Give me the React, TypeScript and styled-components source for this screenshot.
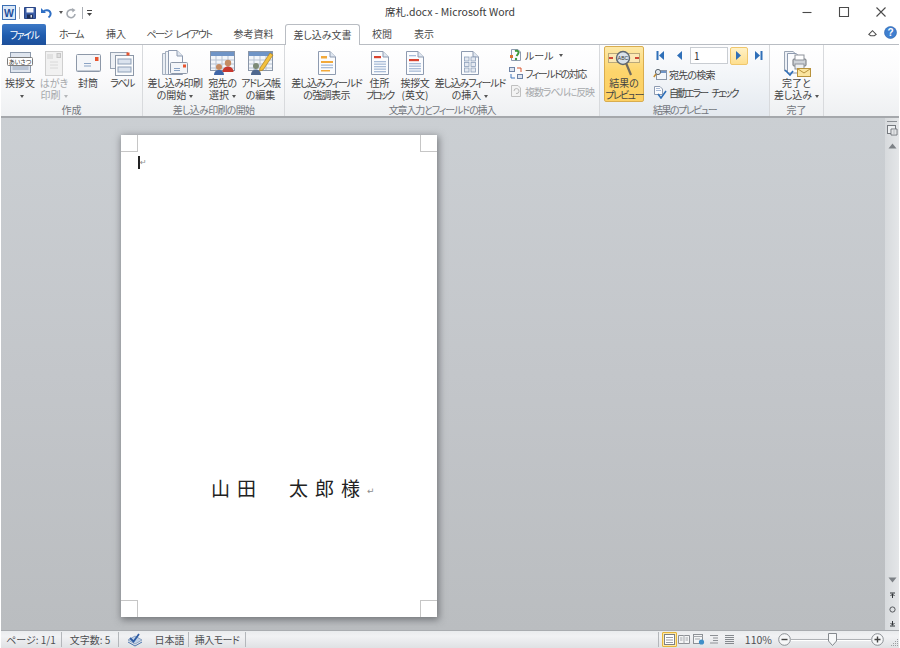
import React from 'react';
import styled, { createGlobalStyle, css } from 'styled-components';

const GlobalStyle = createGlobalStyle`
  html, body {
    margin: 0;
    padding: 0;
    background: #fff;
  }
  body {
    font-family: "Noto Sans CJK JP", "Noto Sans", sans-serif;
    font-feature-settings: "palt";
    color: #444;
    font-size: 10px;
  }
`;

const Window = styled.div`
  width: 900px;
  height: 648px;
  display: flex;
  flex-direction: column;
  overflow: hidden;
  box-sizing: border-box;
  padding: 0 1px;
  background: #fff;
`;

/* kana in the UI font of the reference is narrower than in Noto */
const Fit = styled.span<{ $sp: number; $ws?: number }>`
  letter-spacing: ${p => p.$sp}px;
  word-spacing: ${p => p.$ws ?? 0}px;
`;

/* title bar */
const TitleBar = styled.div`
  height: 23px;
  flex: none;
  display: grid;
  grid-template-columns: 1fr auto 1fr;
  align-items: center;
`;

const Qat = styled.div`
  display: flex;
  align-items: center;
  padding-left: 1px;
  padding-top: 2px;
`;

const QatButton = styled.span<{ $w: number }>`
  width: ${p => p.$w}px;
  display: flex;
  align-items: center;
  justify-content: center;
  height: 16px;
`;

const QatSep = styled.span`
  width: 1px;
  height: 12px;
  background: #a9adb3;
  margin: 0 3px;
`;

const Title = styled.div`
  font-size: 10.5px;
  color: #3c3c3c;
`;

const WinButtons = styled.div`
  display: flex;
  justify-content: flex-end;
  align-items: center;
`;

const WinButton = styled.span`
  width: 37px;
  height: 22px;
  display: flex;
  align-items: center;
  justify-content: center;
`;

/* tabs */
const TabRow = styled.div`
  height: 22px;
  flex: none;
  box-sizing: border-box;
  display: flex;
  align-items: flex-end;
  border-bottom: 1px solid #b9bdc3;
  padding-left: 1px;
`;

const FileTab = styled.div`
  width: 44px;
  height: 21px;
  margin-bottom: -1px;
  padding-bottom: 1px;
  box-sizing: border-box;
  display: flex;
  align-items: center;
  justify-content: center;
  color: #fff;
  font-size: 10px;
  border-radius: 2px 2px 0 0;
  background: linear-gradient(#3d79c6, #1f5cae 55%, #1d4f9a);
`;

const Tab = styled.div<{ $w: number; $active?: boolean }>`
  width: ${p => p.$w}px;
  height: 20px;
  box-sizing: border-box;
  padding-bottom: 2px;
  display: flex;
  align-items: center;
  justify-content: center;
  font-size: 10px;
  color: #4a4a4a;
  ${p =>
    p.$active &&
    css`
      height: 21px;
      margin-bottom: -1px;
      background: #fff;
      border: 1px solid #b9bdc3;
      border-bottom: none;
      border-radius: 3px 3px 0 0;
    `}
`;

const TabRight = styled.div`
  margin-left: auto;
  height: 20px;
  display: flex;
  align-items: center;
  gap: 6px;
  padding: 0 2px 2px 0;
`;

/* ribbon */
const Ribbon = styled.div`
  height: 73px;
  flex: none;
  box-sizing: border-box;
  display: flex;
  border-bottom: 2px solid #a5a8ac;
  background: linear-gradient(#ffffff, #fbfbfc 40%, #eef0f2);
`;

const Group = styled.div<{ $w: number; $tint?: boolean }>`
  width: ${p => p.$w}px;
  flex: none;
  box-sizing: border-box;
  display: flex;
  flex-direction: column;
  border-right: 1px solid #d8dadd;
  ${p => p.$tint && 'background: linear-gradient(#fdfdfe, #f2f5f8 45%, #e4e9ef);'}
`;

const GroupBody = styled.div<{ $pad?: number }>`
  flex: 1;
  display: flex;
  padding-left: ${p => p.$pad ?? 0}px;
`;

const GroupLabel = styled.div`
  height: 13px;
  line-height: 13px;
  text-align: center;
  font-size: 10px;
  color: #73777d;
`;

const RibbonButton = styled.div<{ $w: number; $muted?: boolean; $hot?: boolean }>`
  width: ${p => p.$w}px;
  flex: none;
  box-sizing: border-box;
  display: flex;
  flex-direction: column;
  align-items: center;
  padding-top: 4px;
  font-size: 10px;
  line-height: 12px;
  color: ${p => (p.$muted ? '#a7a9ac' : '#444')};
  white-space: nowrap;
  ${p =>
    p.$hot &&
    css`
      height: 56px;
      margin-top: 1px;
      padding-top: 2px;
      border: 1px solid #d9ad4f;
      border-radius: 2px;
      background: linear-gradient(#fde9a8, #fdd56c 45%, #fcd064);
    `}
`;

const ButtonIcon = styled.div`
  height: 28px;
  display: flex;
  align-items: center;
  justify-content: center;
  flex: none;
`;

const Caret = styled.span<{ $muted?: boolean }>`
  display: inline-block;
  width: 0;
  height: 0;
  margin-left: 3px;
  vertical-align: middle;
  border-left: 2.5px solid transparent;
  border-right: 2.5px solid transparent;
  border-top: 3px solid ${p => (p.$muted ? '#b5b7ba' : '#555')};
`;

const SmallColumn = styled.div<{ $left?: number }>`
  display: flex;
  flex-direction: column;
  margin-left: ${p => p.$left ?? 0}px;
  padding-top: 1px;
`;

const SmallRow = styled.div<{ $muted?: boolean }>`
  height: 18px;
  display: flex;
  align-items: center;
  gap: 2px;
  font-size: 10px;
  white-space: nowrap;
  color: ${p => (p.$muted ? '#a7a9ac' : '#444')};
`;

const NavRow = styled.div`
  height: 19px;
  display: flex;
  align-items: center;
`;

const NavButton = styled.span<{ $w: number; $hot?: boolean }>`
  width: ${p => p.$w}px;
  height: 18px;
  box-sizing: border-box;
  display: flex;
  align-items: center;
  justify-content: center;
  border-radius: 2px;
  ${p =>
    p.$hot &&
    css`
      border: 1px solid #f0c76c;
      background: linear-gradient(#fff1c6, #fedf8e);
    `}
`;

const RecordBox = styled.span`
  width: 38px;
  height: 17px;
  box-sizing: border-box;
  border: 1px solid #c9cdd2;
  background: #fff;
  color: #333;
  font-size: 10px;
  line-height: 15px;
  padding-left: 3px;
  margin: 0 2px 0 1px;
`;

/* workspace */
const Workspace = styled.div`
  flex: 1;
  min-height: 0;
  display: flex;
  background: linear-gradient(#cbcfd3, #c3c6ca 50%, #babdc0);
`;

const DocArea = styled.div`
  flex: 1;
  padding: 17px 0 0 120px;
`;

const Page = styled.div`
  position: relative;
  width: 316px;
  height: 482px;
  box-sizing: border-box;
  background: #fff;
  box-shadow: 1px 2px 7px 1px rgba(60, 62, 66, 0.55);
  display: flex;
  flex-direction: column;
  padding: 21px 0 118px 17px;
`;

const CropMark = styled.span<{ $v: 'top' | 'bottom'; $h: 'left' | 'right' }>`
  position: absolute;
  width: 17px;
  height: 17px;
  box-sizing: border-box;
  ${p => p.$v}: 0;
  ${p => p.$h}: 0;
  border-${p => (p.$v === 'top' ? 'bottom' : 'top')}: 1px solid #c6c6c6;
  border-${p => (p.$h === 'left' ? 'right' : 'left')}: 1px solid #c6c6c6;
`;

const CursorLine = styled.div`
  display: flex;
  align-items: center;
  height: 13px;
`;

const Caretbar = styled.span`
  width: 2px;
  height: 13px;
  background: #222;
`;

const ParaMark = styled.span`
  color: #8c8c8c;
  font-family: "DejaVu Sans", sans-serif;
  font-size: 8px;
  line-height: 8px;
`;

const NameLine = styled.div`
  margin-top: auto;
  padding-left: 73px;
  display: flex;
  align-items: center;
  gap: 6px;
  font-size: 19px;
  line-height: 22px;
  letter-spacing: 7px;
  font-feature-settings: normal;
  color: #222;
  white-space: pre;
`;

const NameMark = styled(ParaMark)`
  letter-spacing: 0;
  padding-top: 6px;
  margin-left: -6px;
  font-size: 9px;
`;

/* scrollbar */
const ScrollBar = styled.div`
  width: 14px;
  flex: none;
  display: flex;
  flex-direction: column;
  align-items: center;
  background: linear-gradient(90deg, #d7dadd, #e4e6e8);
`;

const ScrollCell = styled.span<{ $h: number }>`
  width: 100%;
  height: ${p => p.$h}px;
  display: flex;
  align-items: center;
  justify-content: center;
  flex: none;
`;

const Splitter = styled.span`
  width: 10px;
  height: 1px;
  margin-top: 1px;
  background: #8b8f94;
`;

const ScrollTrack = styled.div`
  flex: 1;
`;

/* status bar */
const StatusBar = styled.div`
  height: 18px;
  flex: none;
  box-sizing: border-box;
  display: flex;
  align-items: center;
  border-top: 1px solid #a9acb0;
  background: linear-gradient(#e9ebed, #f1f2f4 30%, #dfe1e4);
  font-size: 10px;
  color: #4d4f52;
`;

const StatusItem = styled.span<{ $w: number }>`
  width: ${p => p.$w}px;
  height: 15px;
  box-sizing: border-box;
  display: flex;
  align-items: center;
  justify-content: center;
  border-right: 1px solid #b4b7bb;
  white-space: nowrap;
`;

const LangItem = styled(StatusItem)`
  gap: 12px;
  padding-left: 4px;
`;

const StatusRight = styled.div`
  margin-left: auto;
  display: flex;
  align-items: center;
  height: 100%;
`;

const ViewSep = styled(StatusItem)`
  margin-right: 3px;
`;

const ViewButton = styled.span<{ $hot?: boolean }>`
  width: 15px;
  height: 15px;
  box-sizing: border-box;
  display: flex;
  align-items: center;
  justify-content: center;
  ${p =>
    p.$hot &&
    css`
      border: 1px solid #e5b53b;
      background: #fde9a6;
      border-radius: 1px;
    `}
`;

const ZoomText = styled.span`
  margin: 0 6px 0 8px;
  font-size: 10.5px;
`;

const ZoomSlider = styled.div`
  position: relative;
  width: 80px;
  height: 1px;
  background: #aeb1b5;
  border-bottom: 1px solid #fff;
`;

const ZoomThumb = styled.svg`
  position: absolute;
  left: 37px;
  top: -6px;
`;

const GripSlot = styled.span`
  display: flex;
  margin-left: 6px;
  padding-top: 6px;
`;

const DocGlyph = ({ children, muted }: { children?: React.ReactNode; muted?: boolean }) => (
  <svg width="20" height="26" viewBox="0 0 20 26">
    <path
      d="M1.5 1.5H13L18.5 7V24.5H1.5Z"
      fill={muted ? '#f2f2f2' : '#fbfcfe'}
      stroke={muted ? '#cfcfcf' : '#8e9bb0'}
    />
    <path d="M13 1.5V7H18.5" fill="#dfe6f0" stroke={muted ? '#cfcfcf' : '#8e9bb0'} />
    {children}
  </svg>
);

const Lines = ({ y, n, color = '#a9bcd8' }: { y: number; n: number; color?: string }) => (
  <>
    {Array.from({ length: n }, (_, i) => (
      <rect key={i} x="4" y={y + i * 2.5} width="12" height="1.3" fill={color} />
    ))}
  </>
);

const GreetIcon = () => (
  <svg width="26" height="24" viewBox="0 0 26 24">
    <rect x="3.5" y="1.5" width="20" height="20" fill="#dfe5ee" stroke="#8c99ab" />
    <rect x="5.5" y="14" width="16" height="5" fill="#b9c4d4" />
    <rect x="0.5" y="6.5" width="25" height="8" rx="1" fill="#fff" stroke="#7b7b7b" />
    <text x="13" y="13" textAnchor="middle" fontSize="6" fill="#333">あいさつ</text>
  </svg>
);

const PostcardIcon = () => (
  <svg width="18" height="25" viewBox="0 0 18 25">
    <rect x="0.5" y="0.5" width="17" height="24" fill="#f1f1f1" stroke="#cfcfcf" />
    <rect x="12" y="2.5" width="3.5" height="4" fill="#dedede" stroke="#c6c6c6" />
    <path d="M3 3V8M5 3V8M7 3V8" stroke="#d0d0d0" />
    <path d="M5 11H13M5 14H13M5 17H13" stroke="#d8d8d8" />
  </svg>
);

const EnvelopeIcon = () => (
  <svg width="25" height="18" viewBox="0 0 25 18">
    <rect x="0.5" y="0.5" width="24" height="17" rx="1" fill="#f4f6f9" stroke="#8d98a8" />
    <rect x="19" y="3" width="3.5" height="4" fill="#e8552f" />
    <path d="M8 9.5H15M8 12H15" stroke="#8aa3c4" />
    <path d="M1 16.5H24" stroke="#c4cbd5" />
  </svg>
);

const LabelIcon = () => (
  <svg width="24" height="25" viewBox="0 0 24 25">
    <rect x="0.5" y="1.5" width="17" height="16" fill="#eef1f5" stroke="#9aa5b4" />
    <rect x="5.5" y="4.5" width="18" height="20" fill="#fbfcfd" stroke="#8d98a8" />
    <rect x="16.5" y="1.5" width="3" height="3" fill="#e8552f" />
    <rect x="8" y="8" width="13" height="5" fill="#dbe3ee" stroke="#8fa0b8" />
    <rect x="8" y="16" width="13" height="5" fill="#dbe3ee" stroke="#8fa0b8" />
  </svg>
);

const MergeStartIcon = () => (
  <svg width="26" height="26" viewBox="0 0 26 26">
    <path d="M0.5 3.5H10V24.5H0.5Z" fill="#e9edf3" stroke="#a4afbe" />
    <path d="M3.5 1.5H12V24.5H3.5Z" fill="#f1f4f8" stroke="#a4afbe" />
    <path d="M6.5 0.5H15L20.5 6V24.5H6.5Z" fill="#fbfcfe" stroke="#8e9bb0" />
    <path d="M15 0.5V6H20.5" fill="#dfe6f0" stroke="#8e9bb0" />
    <rect x="8.5" y="12.5" width="17" height="11" rx="1" fill="#f3f5f8" stroke="#8d98a8" />
    <rect x="21" y="14.5" width="3" height="3" fill="#e8552f" />
    <path d="M12 18.5H18M12 20.5H18" stroke="#8aa3c4" />
  </svg>
);

const TableBase = () => (
  <>
    <rect x="0.5" y="1.5" width="24" height="19" fill="#f3f6fa" stroke="#8a96a8" />
    <rect x="1" y="2" width="23" height="4" fill="#6f94c6" />
    <path d="M1 10H24M1 14H24M1 18H24M6 6V20M12 6V20M18 6V20" stroke="#b8c3d2" />
  </>
);

const RecipientIcon = () => (
  <svg width="26" height="26" viewBox="0 0 26 26">
    <TableBase />
    <circle cx="9" cy="17" r="3" fill="#c58c62" />
    <path d="M4 25C4 21 7 20 9 20S14 21 14 25Z" fill="#3f66a8" />
    <circle cx="18" cy="13" r="3.2" fill="#c58c62" />
    <path d="M12.5 22C12.5 18 15.5 16.5 18 16.5S23.5 18 23.5 22Z" fill="#c8382e" />
  </svg>
);

const AddressEditIcon = () => (
  <svg width="26" height="26" viewBox="0 0 26 26">
    <TableBase />
    <circle cx="8" cy="16" r="3" fill="#7d8b77" />
    <path d="M3 25C3 21 6 19.5 8 19.5S13 21 13 25Z" fill="#50698f" />
    <path d="M12 18L22 3L25 5L15 20L11.5 21Z" fill="#f3c13e" stroke="#a97d22" strokeWidth="0.7" />
  </svg>
);

const HighlightIcon = () => (
  <DocGlyph>
    <rect x="4" y="6" width="6" height="2.5" fill="#f2a93b" />
    <rect x="4" y="11" width="12" height="2" fill="#f2a93b" />
    <Lines y={14.5} n={2} />
    <rect x="4" y="20" width="9" height="1.5" fill="#f2a93b" />
  </DocGlyph>
);

const AddressBlockIcon = () => (
  <DocGlyph>
    <rect x="4" y="6" width="7" height="2.2" fill="#d9432f" />
    <Lines y={11} n={5} />
  </DocGlyph>
);

const GreetingLineIcon = () => (
  <DocGlyph>
    <rect x="4" y="5" width="7" height="1.3" fill="#a9bcd8" />
    <rect x="4" y="9" width="10" height="2.2" fill="#d9432f" />
    <Lines y={13} n={4} />
  </DocGlyph>
);

const InsertFieldIcon = () => (
  <DocGlyph>
    {[7, 12.5, 18].map(y => (
      <React.Fragment key={y}>
        <rect x="4.5" y={y} width="4.5" height="4" fill="#e4e9f1" stroke="#8ea0bb" strokeWidth="0.8" />
        <rect x="11" y={y} width="4.5" height="4" fill="#e4e9f1" stroke="#8ea0bb" strokeWidth="0.8" />
      </React.Fragment>
    ))}
  </DocGlyph>
);

const RuleIcon = () => (
  <svg width="14" height="14" viewBox="0 0 14 14">
    <path d="M2.5 1.5H9L11.5 4V12.5H2.5Z" fill="#fbfcfe" stroke="#8e9bb0" />
    <path d="M6 3C9 2 10.5 4 9 6L7.5 8" fill="none" stroke="#3f9a3c" strokeWidth="2" />
    <circle cx="7" cy="11" r="1.2" fill="#3f9a3c" />
    <rect x="1" y="7" width="3" height="3" fill="#d9732f" />
  </svg>
);

const MatchIcon = () => (
  <svg width="14" height="14" viewBox="0 0 14 14">
    <rect x="0.5" y="1.5" width="5" height="4" fill="#dfe6f0" stroke="#6d83a6" />
    <rect x="8.5" y="8.5" width="5" height="4" fill="#dfe6f0" stroke="#6d83a6" />
    <path d="M8 2H12V6" fill="none" stroke="#d9572f" />
    <path d="M6 12H2V8" fill="none" stroke="#3f77bd" />
  </svg>
);

const UpdateIcon = () => (
  <svg width="14" height="14" viewBox="0 0 14 14">
    <path d="M2.5 1.5H9L11.5 4V12.5H2.5Z" fill="#f3f3f3" stroke="#c0c0c0" />
    <path d="M5 7A2.5 2.5 0 1 1 7 9.5" fill="none" stroke="#b9b9b9" />
  </svg>
);

const PreviewIcon = () => (
  <svg width="32" height="27" viewBox="0 0 32 27">
    <rect x="0.5" y="3.5" width="31" height="9" fill="#fbe8b5" stroke="#b9a87a" />
    <path d="M1 8H5M27 8H31" stroke="#cf4a36" strokeWidth="2" />
    <circle cx="15" cy="8" r="6.5" fill="#d8e1ea" stroke="#5c6670" strokeWidth="1.4" />
    <text x="15" y="10" textAnchor="middle" fontSize="5" fill="#333" fontFamily="Liberation Sans">ABC</text>
    <path d="M18 13L23 25" stroke="#6f6a5f" strokeWidth="2.2" />
  </svg>
);

const NavIcon = ({ dir, bar }: { dir: 'left' | 'right'; bar?: boolean }) => (
  <svg width="9" height="11" viewBox="0 0 9 11">
    <g transform={dir === 'left' ? undefined : 'matrix(-1 0 0 1 9 0)'}>
      {bar && <rect x="0.5" y="1" width="2" height="9" fill="#2f6fb8" />}
      <path d="M8 1V10L3 5.5Z" fill="#2f6fb8" />
    </g>
  </svg>
);

const FindIcon = () => (
  <svg width="14" height="14" viewBox="0 0 14 14">
    <rect x="3.5" y="3.5" width="10" height="9" fill="#f3f6fa" stroke="#8a96a8" />
    <rect x="4" y="4" width="9" height="2" fill="#6f94c6" />
    <circle cx="5" cy="5" r="2.6" fill="#e3eaf2" stroke="#5c6670" />
    <path d="M3 7L0.8 10" stroke="#c0892f" strokeWidth="1.5" />
  </svg>
);

const CheckErrorIcon = () => (
  <svg width="14" height="14" viewBox="0 0 14 14">
    <path d="M1.5 1.5H7L9.5 4V9.5H1.5Z" fill="#fbfcfe" stroke="#8e9bb0" />
    <path d="M3 3.5H7M3 5.5H8" stroke="#a9bcd8" />
    <path d="M5 9L8 13L13 6" fill="none" stroke="#2f6fb8" strokeWidth="1.6" />
  </svg>
);

const FinishIcon = () => (
  <svg width="28" height="27" viewBox="0 0 28 27">
    <path d="M1.5 1.5H10L14 5V21H1.5Z" fill="#eef1f6" stroke="#9aa5b4" />
    <path d="M4.5 3.5H13L17 7V23H4.5Z" fill="#fbfcfe" stroke="#8e9bb0" />
    <rect x="10" y="9" width="13" height="7" rx="1" fill="#cfd3d8" stroke="#70757b" />
    <rect x="12" y="5" width="9" height="5" fill="#fff" stroke="#8d9299" />
    <rect x="12" y="14" width="9" height="5" fill="#eef0f2" stroke="#8d9299" />
    <path d="M2 20L7 25L10 21" fill="none" stroke="#2f6fb8" strokeWidth="1.6" />
    <rect x="14.5" y="18.5" width="13" height="8" fill="#fbe5a0" stroke="#b8923c" />
    <path d="M15 19L21 23L27 19" fill="none" stroke="#b8923c" />
  </svg>
);

const WordIcon = () => (
  <svg width="14" height="15" viewBox="0 0 14 15">
    <rect x="0.5" y="0.5" width="13" height="14" fill="#dbe8f7" stroke="#3b6eb3" />
    <text x="7" y="11.5" textAnchor="middle" fontSize="10.5" fontWeight="700" fontFamily="Liberation Sans" fill="#1f4f9c">W</text>
  </svg>
);

const SaveIcon = () => (
  <svg width="12" height="12" viewBox="0 0 12 12">
    <path d="M0.5 0.5H11.5V11.5H0.5Z" fill="#3c5fa8" stroke="#2b4686" />
    <rect x="2.5" y="1" width="7" height="4.5" fill="#f6f8fb" />
    <rect x="3" y="7.5" width="6" height="4" fill="#1f2f57" />
    <rect x="6.5" y="8" width="1.5" height="2.5" fill="#d9dde5" />
  </svg>
);

const UndoIcon = () => (
  <svg width="12" height="12" viewBox="0 0 12 12">
    <path d="M1 1V6H6" fill="#2f6fc4" />
    <path d="M3 5C5 2.5 9.5 2.5 10.5 6C10.8 7.5 10 9.5 8.5 10.5" fill="none" stroke="#2f6fc4" strokeWidth="2" />
  </svg>
);

const RedoIcon = () => (
  <svg width="12" height="12" viewBox="0 0 12 12">
    <path d="M7 1L10.5 3L7.5 5.5Z" fill="#a4a9b0" />
    <path d="M8 3.2A4 4 0 1 0 10 7" fill="none" stroke="#a4a9b0" strokeWidth="1.6" />
  </svg>
);

const QatMoreIcon = () => (
  <svg width="7" height="8" viewBox="0 0 7 8">
    <path d="M1 1.5H6" stroke="#444" />
    <path d="M1 4H6L3.5 7Z" fill="#444" />
  </svg>
);

const StrokeIcon = ({ d, w = 12 }: { d: string; w?: number }) => (
  <svg width={w} height={w} viewBox="0 0 12 12">
    <path d={d} fill="none" stroke="#4a4a4a" strokeWidth="1.1" />
  </svg>
);

const HelpIcon = () => (
  <svg width="13" height="13" viewBox="0 0 13 13">
    <circle cx="6.5" cy="6.5" r="6" fill="#3f7fcf" stroke="#2c62ab" strokeWidth="0.6" />
    <text x="6.5" y="10.2" textAnchor="middle" fontSize="10" fontWeight="700" fontFamily="Liberation Sans" fill="#fff">?</text>
  </svg>
);

const SpellIcon = () => (
  <svg width="16" height="14" viewBox="0 0 16 14">
    <path d="M1 7L8 11L15 7L8 3Z" fill="#c3d3e8" stroke="#6f8db4" strokeWidth="0.7" />
    <path d="M1 9L8 13L15 9" fill="none" stroke="#4a74ad" />
    <path d="M3 5L6.5 8.5L12 1" fill="none" stroke="#2f5ca3" strokeWidth="1.8" />
  </svg>
);

const PrintLayoutIcon = () => (
  <svg width="11" height="11" viewBox="0 0 11 11">
    <rect x="0.5" y="0.5" width="10" height="10" fill="#fff" stroke="#7b7f84" />
    <path d="M2 3.5H9M2 6H9M2 8.5H9" stroke="#9a9ea3" />
  </svg>
);

const ReadIcon = () => (
  <svg width="12" height="11" viewBox="0 0 12 11">
    <path d="M0.5 1.5H5.5L6 2L6.5 1.5H11.5V9.5H0.5Z" fill="#f4f5f6" stroke="#8d9196" />
    <path d="M6 2V9.5M2 4H4.5M2 6H4.5M7.5 4H10M7.5 6H10" stroke="#a4a8ad" />
  </svg>
);

const WebIcon = () => (
  <svg width="12" height="11" viewBox="0 0 12 11">
    <rect x="0.5" y="0.5" width="9" height="9" fill="#f4f5f6" stroke="#8d9196" />
    <path d="M0.5 2.5H9.5M2 5H7" stroke="#a4a8ad" />
    <circle cx="8.5" cy="8" r="2.6" fill="#3f8fc8" />
  </svg>
);

const OutlineIcon = () => (
  <svg width="11" height="11" viewBox="0 0 11 11">
    <path d="M1 1.5H9M4 4H9M4 6.5H9M1 9H9" stroke="#8d9196" />
  </svg>
);

const DraftIcon = () => (
  <svg width="11" height="11" viewBox="0 0 11 11">
    <path d="M1 1.5H10M1 3.5H10M1 5.5H10M1 7.5H10M1 9.5H10" stroke="#85898e" />
  </svg>
);

const RoundZoom = ({ plus }: { plus?: boolean }) => (
  <svg width="13" height="13" viewBox="0 0 13 13">
    <circle cx="6.5" cy="6.5" r="5.8" fill="#f6f7f8" stroke="#8b8f94" />
    <path d={plus ? 'M3.5 6.5H9.5M6.5 3.5V9.5' : 'M3.5 6.5H9.5'} stroke="#444" strokeWidth="1.4" />
  </svg>
);

const GripIcon = () => (
  <svg width="9" height="9" viewBox="0 0 9 9">
    <path d="M7 1H8V2H7ZM5 3H6V4H5ZM7 3H8V4H7ZM3 5H4V6H3ZM5 5H6V6H5ZM7 5H8V6H7ZM1 7H2V8H1ZM3 7H4V8H3ZM5 7H6V8H5ZM7 7H8V8H7Z" fill="#9c9fa3" />
  </svg>
);

const ScrollArrow = ({ up }: { up?: boolean }) => (
  <svg width="9" height="6" viewBox="0 0 9 6">
    <path d={up ? 'M0.5 5.5H8.5L4.5 0.5Z' : 'M0.5 0.5H8.5L4.5 5.5Z'} fill="#7d8186" />
  </svg>
);

const BrowseIcon = ({ kind }: { kind: 'prev' | 'dot' | 'next' }) => (
  <svg width="7" height="7" viewBox="0 0 7 7">
    {kind === 'dot' ? (
      <circle cx="3.5" cy="3.5" r="2.6" fill="none" stroke="#55585c" />
    ) : kind === 'prev' ? (
      <path d="M1 1H6M3.5 6V1.5M1.5 4L3.5 2L5.5 4" fill="none" stroke="#33363a" />
    ) : (
      <path d="M1 6H6M3.5 1V5.5M1.5 3L3.5 5L5.5 3" fill="none" stroke="#33363a" />
    )}
  </svg>
);

const RulerIcon = () => (
  <svg width="11" height="12" viewBox="0 0 11 12">
    <rect x="0.5" y="0.5" width="8" height="8" fill="#eef0f2" stroke="#75797e" />
    <path d="M4 4H10V10H4Z" fill="#f8f9fa" stroke="#75797e" />
    <path d="M5.5 6H8.5M5.5 8H8.5" stroke="#a4a8ad" />
  </svg>
);

export default function App() {
  return (
    <>
      <GlobalStyle />
      <Window>
        <TitleBar>
          <Qat>
            <QatButton $w={14}><WordIcon /></QatButton>
            <QatSep />
            <QatButton $w={14}><SaveIcon /></QatButton>
            <QatButton $w={18}><UndoIcon /></QatButton>
            <QatButton $w={8}><Caret /></QatButton>
            <QatButton $w={16}><RedoIcon /></QatButton>
            <QatSep />
            <QatButton $w={7}><QatMoreIcon /></QatButton>
          </Qat>
          <Title>席札.docx - Microsoft Word</Title>
          <WinButtons>
            <WinButton><StrokeIcon d="M1.5 6.5H10.5" /></WinButton>
            <WinButton><StrokeIcon d="M1.5 1.5H10.5V10.5H1.5Z" /></WinButton>
            <WinButton><StrokeIcon d="M1.5 1.5L10.5 10.5M10.5 1.5L1.5 10.5" /></WinButton>
          </WinButtons>
        </TitleBar>

        <TabRow>
          <FileTab><Fit $sp={-1.5}>ファイル</Fit></FileTab>
          <Tab $w={50}><Fit $sp={-1.5}>ホーム</Fit></Tab>
          <Tab $w={40}>挿入</Tab>
          <Tab $w={86}><Fit $sp={-1.5} $ws={3}>ページ レイアウト</Fit></Tab>
          <Tab $w={63}>参考資料</Tab>
          <Tab $w={75} $active>差し込み文書</Tab>
          <Tab $w={44}>校閲</Tab>
          <Tab $w={40}>表示</Tab>
          <TabRight>
            <StrokeIcon d="M2 8L6 4L10 8L8 9.5H4Z" w={11} />
            <HelpIcon />
          </TabRight>
        </TabRow>

        <Ribbon>
          <Group $w={142}>
            <GroupBody $pad={2}>
              <RibbonButton $w={34}>
                <ButtonIcon><GreetIcon /></ButtonIcon>
                挨拶文
                <span><Caret /></span>
              </RibbonButton>
              <RibbonButton $w={34} $muted>
                <ButtonIcon><PostcardIcon /></ButtonIcon>
                はがき
                <span>印刷<Caret $muted /></span>
              </RibbonButton>
              <RibbonButton $w={34}>
                <ButtonIcon><EnvelopeIcon /></ButtonIcon>
                封筒
              </RibbonButton>
              <RibbonButton $w={34}>
                <ButtonIcon><LabelIcon /></ButtonIcon>
                <Fit $sp={-1.5}>ラベル</Fit>
              </RibbonButton>
            </GroupBody>
            <GroupLabel>作成</GroupLabel>
          </Group>

          <Group $w={142}>
            <GroupBody $pad={3}>
              <RibbonButton $w={58}>
                <ButtonIcon><MergeStartIcon /></ButtonIcon>
                <Fit $sp={-0.5}>差し込み印刷</Fit>
                <span>の開始<Caret /></span>
              </RibbonButton>
              <RibbonButton $w={37}>
                <ButtonIcon><RecipientIcon /></ButtonIcon>
                <Fit $sp={-0.3}>宛先の</Fit>
                <span>選択<Caret /></span>
              </RibbonButton>
              <RibbonButton $w={39}>
                <ButtonIcon><AddressEditIcon /></ButtonIcon>
                <Fit $sp={-1.3}>アドレス帳</Fit>
                <span>の編集</span>
              </RibbonButton>
            </GroupBody>
            <GroupLabel><Fit $sp={-0.7}>差し込み印刷の開始</Fit></GroupLabel>
          </Group>

          <Group $w={315}>
            <GroupBody $pad={6}>
              <RibbonButton $w={71}>
                <ButtonIcon><HighlightIcon /></ButtonIcon>
                <Fit $sp={-1.2}>差し込みフィールド</Fit>
                <Fit $sp={-0.6}>の強調表示</Fit>
              </RibbonButton>
              <RibbonButton $w={35}>
                <ButtonIcon><AddressBlockIcon /></ButtonIcon>
                住所
                <Fit $sp={-2}>ブロック</Fit>
              </RibbonButton>
              <RibbonButton $w={36}>
                <ButtonIcon><GreetingLineIcon /></ButtonIcon>
                <Fit $sp={-0.3}>挨拶文</Fit>
                <span>(英文)</span>
              </RibbonButton>
              <RibbonButton $w={74}>
                <ButtonIcon><InsertFieldIcon /></ButtonIcon>
                <Fit $sp={-1.2}>差し込みフィールド</Fit>
                <span>の挿入<Caret /></span>
              </RibbonButton>
              <SmallColumn $left={2}>
                <SmallRow><RuleIcon />ルール<Caret /></SmallRow>
                <SmallRow><MatchIcon /><Fit $sp={-1.5}>フィールドの対応</Fit></SmallRow>
                <SmallRow $muted><UpdateIcon /><Fit $sp={-1.1}>複数ラベルに反映</Fit></SmallRow>
              </SmallColumn>
            </GroupBody>
            <GroupLabel><Fit $sp={-1.15}>文章入力とフィールドの挿入</Fit></GroupLabel>
          </Group>

          <Group $w={170} $tint>
            <GroupBody $pad={4}>
              <RibbonButton $w={40} $hot>
                <ButtonIcon><PreviewIcon /></ButtonIcon>
                結果の
                <Fit $sp={-1.6}>プレビュー</Fit>
              </RibbonButton>
              <SmallColumn $left={9}>
                <NavRow>
                  <NavButton $w={15}><NavIcon dir="left" bar /></NavButton>
                  <NavButton $w={21}><NavIcon dir="left" /></NavButton>
                  <RecordBox>1</RecordBox>
                  <NavButton $w={18} $hot><NavIcon dir="right" /></NavButton>
                  <NavButton $w={20}><NavIcon dir="right" bar /></NavButton>
                </NavRow>
                <SmallRow><FindIcon /><Fit $sp={-0.8}>宛先の検索</Fit></SmallRow>
                <SmallRow><CheckErrorIcon /><Fit $sp={-2} $ws={4}>自動エラー チェック</Fit></SmallRow>
              </SmallColumn>
            </GroupBody>
            <GroupLabel><Fit $sp={-1.5}>結果のプレビュー</Fit></GroupLabel>
          </Group>

          <Group $w={54}>
            <GroupBody>
              <RibbonButton $w={53}>
                <ButtonIcon><FinishIcon /></ButtonIcon>
                完了と
                <span>差し込み<Caret /></span>
              </RibbonButton>
            </GroupBody>
            <GroupLabel>完了</GroupLabel>
          </Group>
        </Ribbon>

        <Workspace>
          <DocArea>
            <Page>
              <CropMark $v="top" $h="left" />
              <CropMark $v="top" $h="right" />
              <CropMark $v="bottom" $h="left" />
              <CropMark $v="bottom" $h="right" />
              <CursorLine>
                <Caretbar />
                <ParaMark>↵</ParaMark>
              </CursorLine>
              <NameLine>
                山田　太郎様
                <NameMark>↵</NameMark>
              </NameLine>
            </Page>
          </DocArea>
          <ScrollBar>
            <ScrollCell $h={6}><Splitter /></ScrollCell>
            <ScrollCell $h={14}><RulerIcon /></ScrollCell>
            <ScrollCell $h={15}><ScrollArrow up /></ScrollCell>
            <ScrollTrack />
            <ScrollCell $h={16}><ScrollArrow /></ScrollCell>
            <ScrollCell $h={14}><BrowseIcon kind="prev" /></ScrollCell>
            <ScrollCell $h={14}><BrowseIcon kind="dot" /></ScrollCell>
            <ScrollCell $h={14}><BrowseIcon kind="next" /></ScrollCell>
          </ScrollBar>
        </Workspace>

        <StatusBar>
          <StatusItem $w={61}>ページ: 1/1</StatusItem>
          <StatusItem $w={57}>文字数: 5</StatusItem>
          <LangItem $w={70}><SpellIcon />日本語</LangItem>
          <StatusItem $w={57}><Fit $sp={-0.6}>挿入モード</Fit></StatusItem>
          <StatusRight>
            <ViewSep $w={1} />
            <ViewButton $hot><PrintLayoutIcon /></ViewButton>
            <ViewButton><ReadIcon /></ViewButton>
            <ViewButton><WebIcon /></ViewButton>
            <ViewButton><OutlineIcon /></ViewButton>
            <ViewButton><DraftIcon /></ViewButton>
            <ZoomText>110%</ZoomText>
            <RoundZoom />
            <ZoomSlider>
              <ZoomThumb width="9" height="13" viewBox="0 0 9 13">
                <path d="M0.5 0.5H8.5V8L4.5 12.5L0.5 8Z" fill="#f7f8f9" stroke="#85898e" />
              </ZoomThumb>
            </ZoomSlider>
            <RoundZoom plus />
            <GripSlot><GripIcon /></GripSlot>
          </StatusRight>
        </StatusBar>
      </Window>
    </>
  );
}
